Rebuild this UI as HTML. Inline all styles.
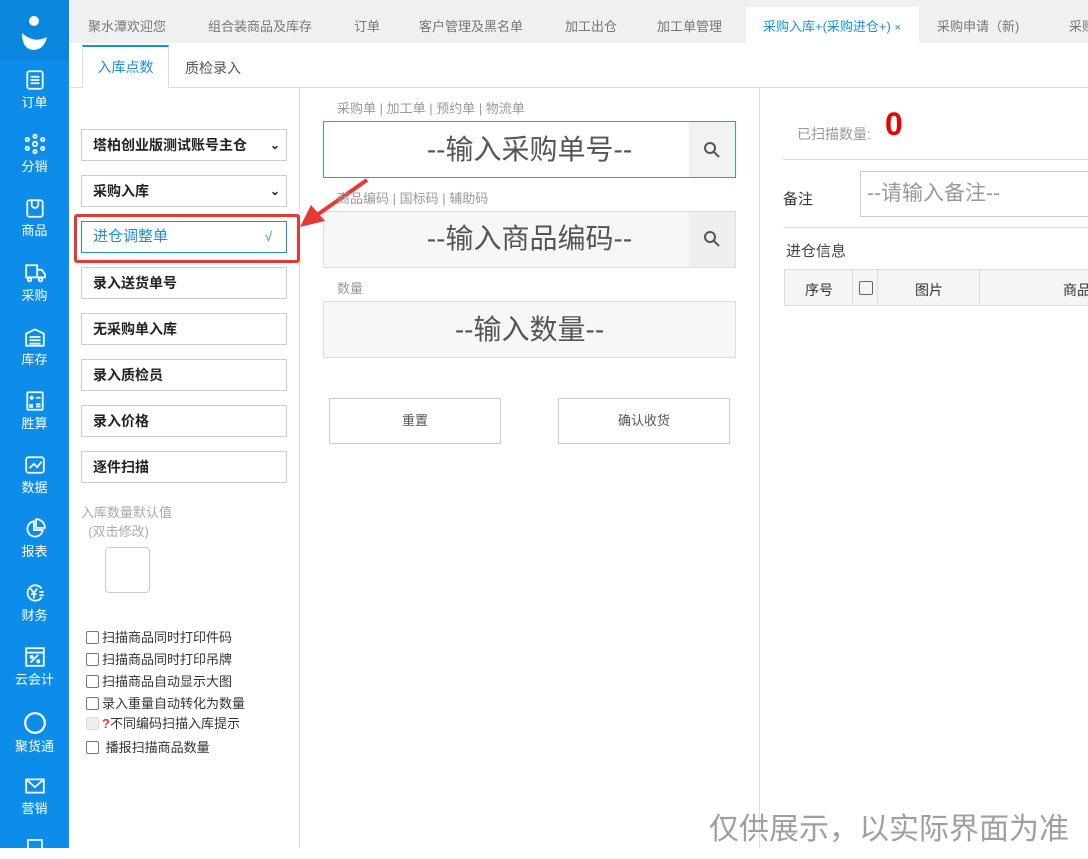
<!DOCTYPE html>
<html><head><meta charset="utf-8"><style>
*{box-sizing:border-box;margin:0;padding:0}
body{width:1088px;height:848px;overflow:hidden;background:#fff;font-family:"Liberation Sans","Noto Sans CJK SC",sans-serif;position:relative;color:#333}
.abs{position:absolute}
#side{left:0;top:0;width:69px;height:848px;background:#0b8de9}
#side .logo{left:0;top:0;width:69px;height:60px;background:#0a86de}
.si{position:absolute;left:0;width:69px;text-align:center;color:#fff;font-size:13px}
.si svg{display:block;margin:0 auto 1px}
#tabs{left:69px;top:0;width:1019px;height:43px;background:#eff0f1;overflow:hidden}
.tab{position:absolute;top:16px;font-size:13px;color:#777;white-space:nowrap}
.sel{position:absolute;left:81px;width:206px;height:32px;border:1px solid #ccc;background:#fff;font-size:14px;font-weight:bold;color:#222;padding-left:11px;line-height:30px}
.inp{position:absolute;left:323px;width:413px;height:57px;border:1px solid #ddd;background:#f7f7f7;font-size:28px;color:#555;text-align:center;line-height:55px}
.lbl{position:absolute;left:337px;font-size:13px;color:#999}
.btn{position:absolute;top:398px;width:172px;height:46px;border:1px solid #ccc;background:#fff;font-size:13px;color:#555;text-align:center;line-height:44px}
.cb{position:absolute;left:86px;font-size:13px;color:#333;white-space:nowrap}
.cb i{display:inline-block;width:13px;height:13px;border:1px solid #777;border-radius:2px;vertical-align:-2px;margin-right:3px}
</style></head><body>
<div id="side" class="abs">
<div class="logo abs"><svg width="69" height="60" viewBox="0 0 69 60"><circle cx="34" cy="21" r="5" fill="#fff"/><path d="M22 33 Q34 44 47 37 Q44 50 33 50 Q22 49 22 33Z" fill="#fff"/></svg></div>
<div class="si" style="top:69px"><svg width="22" height="22" viewBox="0 0 20 20" fill="none" stroke="#fff" stroke-width="1.6"><rect x="3" y="2" width="14" height="16" rx="2"/><path d="M6 7h8M6 10h8M6 13h8"/></svg>订单</div>
<div class="si" style="top:133px"><svg width="22" height="22" viewBox="0 0 20 20" fill="none" stroke="#fff" stroke-width="1.6"><circle cx="10" cy="10" r="2"/><circle cx="10" cy="3" r="1.5"/><circle cx="10" cy="17" r="1.5"/><circle cx="3" cy="6" r="1.5"/><circle cx="17" cy="6" r="1.5"/><circle cx="3" cy="14" r="1.5"/><circle cx="17" cy="14" r="1.5"/></svg>分销</div>
<div class="si" style="top:197px"><svg width="22" height="22" viewBox="0 0 20 20" fill="none" stroke="#fff" stroke-width="1.6"><rect x="3" y="3" width="14" height="15" rx="2"/><path d="M7 3v4a3 3 0 0 0 6 0V3"/></svg>商品</div>
<div class="si" style="top:262px"><svg width="22" height="22" viewBox="0 0 20 20" fill="none" stroke="#fff" stroke-width="1.6"><path d="M2 3h10v11H2zM12 7h4l3 4v3h-7"/><circle cx="5" cy="16" r="1.6"/><circle cx="15" cy="16" r="1.6"/></svg>采购</div>
<div class="si" style="top:326px"><svg width="22" height="22" viewBox="0 0 20 20" fill="none" stroke="#fff" stroke-width="1.6"><path d="M2 7l8-4 8 4v11H2zM5 10h10M5 13h10M5 16h10"/></svg>库存</div>
<div class="si" style="top:390px"><svg width="22" height="22" viewBox="0 0 20 20" fill="none" stroke="#fff" stroke-width="1.6"><rect x="3" y="2" width="14" height="16" rx="1"/><path d="M5 7h4M7 5v4M11 7h4M5 13l3 3M8 13l-3 3M11 13h4M11 15h4"/></svg>胜算</div>
<div class="si" style="top:454px"><svg width="22" height="22" viewBox="0 0 20 20" fill="none" stroke="#fff" stroke-width="1.6"><rect x="2" y="3" width="16" height="14" rx="2"/><path d="M5 13l4-4 3 3 4-5"/></svg>数据</div>
<div class="si" style="top:518px"><svg width="22" height="22" viewBox="0 0 20 20" fill="none" stroke="#fff" stroke-width="1.6"><path d="M9 3a7 7 0 1 0 8 8H9z"/><path d="M11 1v8h8a8 8 0 0 0-8-8z"/></svg>报表</div>
<div class="si" style="top:582px"><svg width="22" height="22" viewBox="0 0 20 20" fill="none" stroke="#fff" stroke-width="1.6"><path d="M16 6a7 7 0 1 0 0 8"/><path d="M6 6l3 4 3-4M9 10v5M6.5 11h5M14 9h4M14 12h4"/></svg>财务</div>
<div class="si" style="top:646px"><svg width="22" height="22" viewBox="0 0 20 20" fill="none" stroke="#fff" stroke-width="1.6"><rect x="2" y="2" width="16" height="16"/><path d="M2 6h16M6 15l7-7"/><circle cx="7" cy="10" r="1"/><circle cx="13" cy="14" r="1"/></svg>云会计</div>
<div class="si" style="top:711px"><svg width="24" height="24" viewBox="0 0 22 22" fill="none" stroke="#fff" stroke-width="2"><circle cx="11" cy="11" r="9"/></svg>聚货通</div>
<div class="si" style="top:775px"><svg width="22" height="22" viewBox="0 0 20 20" fill="none" stroke="#fff" stroke-width="1.6"><rect x="2" y="4" width="16" height="12"/><path d="M2 4l8 7 8-7"/></svg>营销</div>
<div class="si" style="top:838px"><svg width="20" height="20" viewBox="0 0 20 20" fill="none" stroke="#fff" stroke-width="1.6"><rect x="3" y="2" width="14" height="16"/></svg></div>
</div>
<div id="tabs" class="abs">
<span class="tab" style="left:19px">聚水潭欢迎您</span>
<span class="tab" style="left:139px">组合装商品及库存</span>
<span class="tab" style="left:285px">订单</span>
<span class="tab" style="left:350px">客户管理及黑名单</span>
<span class="tab" style="left:496px">加工出仓</span>
<span class="tab" style="left:588px">加工单管理</span>
<div class="abs" style="left:677px;top:7px;width:173px;height:36px;background:#fff"></div>
<span class="tab" style="left:694px;color:#1b8fd8">采购入库+(采购进仓+) <small style="font-size:11px">×</small></span>
<span class="tab" style="left:868px">采购申请（新)</span>
<span class="tab" style="left:1000px">采购</span>
</div>
<div class="abs" style="left:69px;top:87px;width:1019px;height:1px;background:#ddd"></div>
<div class="abs" style="left:82px;top:45px;width:87px;height:43px;background:#fff;border:1px solid #ddd;border-bottom:none;border-top:2px solid #1b8fd8;font-size:14px;color:#1b8fd8;text-align:center;line-height:40px">入库点数</div>
<div class="abs" style="left:185px;top:58px;font-size:14px;color:#555">质检录入</div>
<div class="abs" style="left:299px;top:88px;width:1px;height:760px;background:#ddd"></div>
<div class="abs" style="left:759px;top:88px;width:1px;height:760px;background:#ddd"></div>

<div class="sel" style="top:129px">塔柏创业版测试账号主仓<span style="position:absolute;right:6px;font-size:12px">⌄</span></div>
<div class="sel" style="top:175px">采购入库<span style="position:absolute;right:6px;font-size:12px">⌄</span></div>
<div class="abs" style="left:74px;top:214px;width:226px;height:49px;border:3px solid #e53935;border-radius:3px"></div>
<div class="sel" style="top:221px;border-color:#1b8fd8;color:#1b8fd8;font-weight:normal;font-size:15px">进仓调整单<span style="position:absolute;right:14px;font-size:13px">√</span></div>
<div class="sel" style="top:267px">录入送货单号</div>
<div class="sel" style="top:313px">无采购单入库</div>
<div class="sel" style="top:359px">录入质检员</div>
<div class="sel" style="top:405px">录入价格</div>
<div class="sel" style="top:451px">逐件扫描</div>
<div class="abs" style="left:81px;top:503px;font-size:13px;color:#aaa;line-height:19px">入库数量默认值<br>&nbsp;&nbsp;(双击修改)</div>
<div class="abs" style="left:105px;top:547px;width:45px;height:46px;border:1px solid #ccc;border-radius:4px"></div>
<div class="cb" style="top:627px"><i></i>扫描商品同时打印件码</div>
<div class="cb" style="top:649px"><i></i>扫描商品同时打印吊牌</div>
<div class="cb" style="top:671px"><i></i>扫描商品自动显示大图</div>
<div class="cb" style="top:693px"><i></i>录入重量自动转化为数量</div>
<div class="cb" style="top:713px"><i style="border-color:#ddd;background:#eee"></i><b style="color:#e53935;font-size:13px">?</b>不同编码扫描入库提示</div>
<div class="cb" style="top:737px"><i></i> 播报扫描商品数量</div>

<svg class="abs" style="left:295px;top:175px" width="80" height="60"><path d="M72 5 L22 40" stroke="#e53935" stroke-width="4"/><path d="M5 52 L16 30 L30 46Z" fill="#e53935"/></svg>

<div class="lbl" style="top:98px">采购单 | 加工单 | 预约单 | 物流单</div>
<div class="abs" style="left:689px;top:122px;width:46px;height:55px;background:#f2f2f2"></div>
<div class="abs" style="left:689px;top:212px;width:46px;height:55px;background:#efefef"></div>
<div class="inp" style="top:121px;border-color:#2a9fd6;background:transparent">--输入采购单号--</div>
<div class="lbl" style="top:188px">商品编码 | 国标码 | 辅助码</div>
<div class="inp" style="top:211px;background:transparent;z-index:-1"></div>
<div class="abs" style="left:323px;top:211px;width:413px;height:57px;background:#f7f7f7;z-index:-2"></div>
<div class="inp" style="top:211px;background:transparent;border:none">--输入商品编码--</div>
<div class="lbl" style="top:278px">数量</div>
<div class="inp" style="top:301px">--输入数量--</div>
<svg class="abs" style="left:703px;top:141px" width="18" height="18" fill="none" stroke="#555" stroke-width="2"><circle cx="7" cy="7" r="5"/><path d="M11 11l5 5"/></svg>
<svg class="abs" style="left:703px;top:230px" width="18" height="18" fill="none" stroke="#555" stroke-width="2"><circle cx="7" cy="7" r="5"/><path d="M11 11l5 5"/></svg>
<div class="btn" style="left:329px">重置</div>
<div class="btn" style="left:558px">确认收货</div>

<div class="abs" style="left:797px;top:124px;font-size:14px;color:#999">已扫描数量:</div>
<div class="abs" style="left:885px;top:106px;font-size:32px;font-weight:bold;color:#e00">0</div>
<div class="abs" style="left:783px;top:159px;width:305px;height:1px;background:#ddd"></div>
<div class="abs" style="left:783px;top:188px;font-size:15px;color:#333">备注</div>
<div class="abs" style="left:860px;top:171px;width:240px;height:46px;border:1px solid #ccc;font-size:21px;color:#999;padding-left:6px;line-height:44px;white-space:nowrap">--请输入备注--</div>
<div class="abs" style="left:783px;top:227px;width:305px;height:1px;background:#ddd"></div>
<div class="abs" style="left:786px;top:240px;font-size:15px;color:#444">进仓信息</div>
<div class="abs" style="left:784px;top:269px;width:310px;height:37px;border:1px solid #ddd;background:#f5f5f5;font-size:14px;color:#333">
<span class="abs" style="left:20px;top:10px">序号</span>
<div class="abs" style="left:67px;top:0;width:1px;height:36px;background:#ddd"></div>
<i class="abs" style="left:74px;top:11px;width:14px;height:14px;border:1px solid #666;border-radius:2px"></i>
<div class="abs" style="left:92px;top:0;width:1px;height:36px;background:#ddd"></div>
<span class="abs" style="left:130px;top:10px">图片</span>
<div class="abs" style="left:194px;top:0;width:1px;height:36px;background:#ddd"></div>
<span class="abs" style="left:278px;top:10px">商品</span>
</div>
<div class="abs" style="left:709px;top:804px;font-size:30px;color:#888;opacity:.8;white-space:nowrap">仅供展示，以实际界面为准</div>
</body></html>
